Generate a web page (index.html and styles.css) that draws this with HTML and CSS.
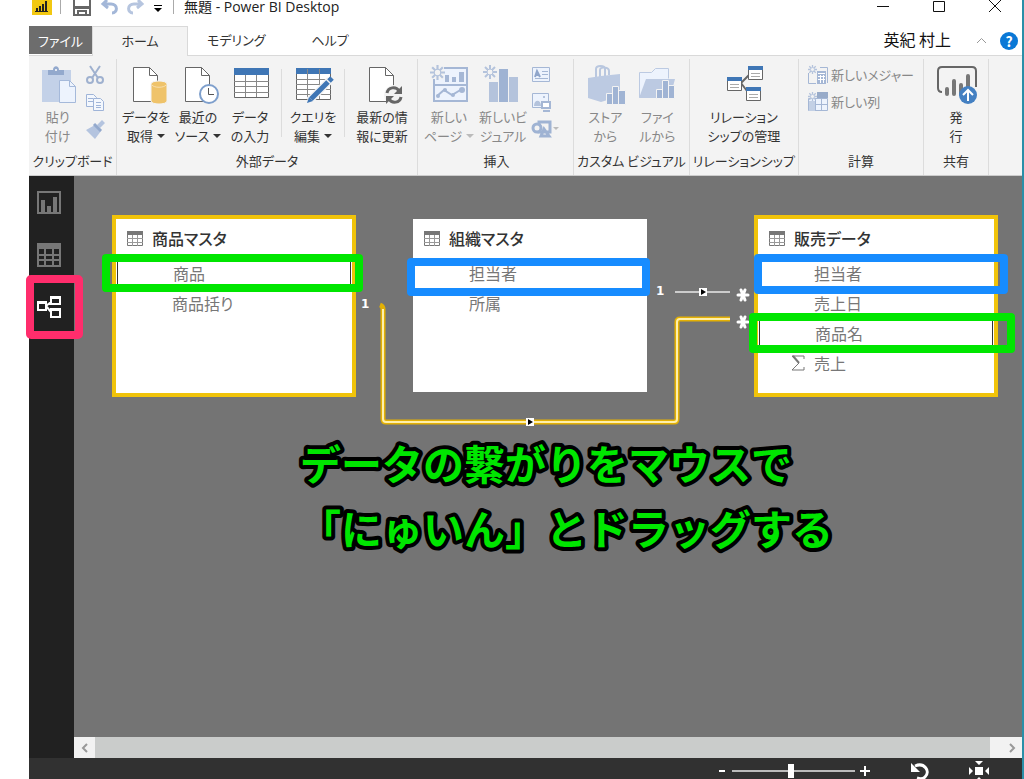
FILE: index.html
```html
<!DOCTYPE html>
<html lang="ja">
<head>
    <meta charset="UTF-8">
    <meta name="viewport" content="width=device-width, initial-scale=1.0">
    <title>無題 - Power BI Desktop</title>
    <link rel="stylesheet" href="styles.css">
</head>
<body>
    <svg class="defs" width="0" height="0">
        <symbol id="table-icon" viewBox="0 0 16 15">
            <path fill="#fff" stroke="#777" d="M.5.5h15v14H.5z"/>
            <path fill="#777" d="M0 0h16v4H0z"/>
            <path stroke="#999" d="M0 7.5h16M0 11.5h16M5.5 4v11M10.5 4v11"/>
        </symbol>
        <symbol id="spark" viewBox="0 0 14 14">
            <path stroke="#b4c3dc" stroke-width="2" d="M7 0v14M0 7h14M2 2l10 10M12 2L2 12"/>
            <circle cx="7" cy="7" r="3" fill="#f3f3f3" stroke="#b4c3dc"/>
        </symbol>
        <symbol id="page" viewBox="0 0 44 40">
            <path fill="#fff" stroke="#666" d="M9.500 2.500h16l8 8v26h-24z"/>
            <path fill="none" stroke="#666" d="M25.500 2.500v8h8"/>
        </symbol>
        <symbol id="many" viewBox="0 0 14 14">
            <path stroke="#fff" stroke-width="3" stroke-linecap="round" d="M2 7h10M5 2l4 10M9 2L5 12"/>
        </symbol>
        <symbol id="arrow" viewBox="0 0 8 8">
            <path fill="#fff" d="M0 0h8v8H0z"/>
            <path d="M2 1l5 3-5 3z"/>
        </symbol>
    </svg>

    <div class="window">
        <header class="titlebar">
            <svg class="logo" width="20" height="20" viewBox="0 0 20 20">
                <path fill="#f2c811" d="M0 0h20v20H0z"/>
                <path stroke="#222" stroke-width="2" d="M5 17v-4M8 17v-6M11 17V9M14 17V6"/>
                <path stroke="#222" d="M3 16.500h13"/>
            </svg>
            <span class="divider"></span>
            <button class="quick" aria-label="保存">
                <svg width="18" height="20" viewBox="0 0 18 20"><path fill="none" stroke="#666" stroke-width="2" d="M1 1h16v17H1z"/><path fill="#666" d="M1 9h16v3H1z"/><path fill="none" stroke="#666" stroke-width="2" d="M5 18v-4h8v4"/></svg>
            </button>
            <button class="quick" aria-label="元に戻す">
                <svg width="18" height="18" viewBox="0 0 18 18"><path fill="none" stroke="#a3b7d8" stroke-width="3" d="M7 2L3 6l5 4M3 6h8c7 0 7 9 1 9"/></svg>
            </button>
            <button class="quick" aria-label="やり直し">
                <svg width="18" height="18" viewBox="0 0 18 18"><path fill="none" stroke="#b6c5df" stroke-width="3" d="M11 2l4 4-5 4M15 6H7c-7 0-7 9-1 9"/></svg>
            </button>
            <button class="quick more" aria-label="カスタマイズ">
                <svg width="8" height="8" viewBox="0 0 8 8"><path d="M0 0h8v1H0zM0 3h8L4 7z"/></svg>
            </button>
            <span class="divider"></span>
            <h1 class="doc-title">無題 - Power BI Desktop</h1>
            <div class="window-btns">
                <button aria-label="最小化"><svg width="14" height="14" viewBox="0 0 14 14"><path stroke="#111" d="M1 6.500h12"/></svg></button>
                <button aria-label="最大化"><svg width="14" height="14" viewBox="0 0 14 14"><path fill="none" stroke="#111" d="M1.500 1.500h11v10h-11z"/></svg></button>
                <button aria-label="閉じる"><svg width="14" height="14" viewBox="0 0 14 14"><path stroke="#111" d="M1 0l12 12M13 0L1 12"/></svg></button>
            </div>
        </header>

        <nav class="tabs">
            <button class="tab file">ファイル</button>
            <button class="tab active">ホーム</button>
            <button class="tab">モデリング</button>
            <button class="tab help">ヘルプ</button>
            <div class="account">
                <span>英紀 村上</span>
                <button class="collapse" aria-label="リボンを折りたたむ"><svg width="11" height="7" viewBox="0 0 11 7"><path fill="none" stroke="#999" d="M1 6l4.500-4.500L10 6"/></svg></button>
                <button class="help-btn" aria-label="ヘルプ">?</button>
            </div>
        </nav>

        <div class="ribbon">
            <section class="group clipboard">
                <div class="tools">
                    <button class="tool off" disabled>
                        <svg class="icon" viewBox="0 0 44 40"><path fill="#c3d1e8" d="M6 5h29v32H6z"/><path fill="#93a9cd" d="M12 10V5h5c0-5 6-5 6 0h5v5z"/><circle cx="20" cy="5" r="1" fill="#fff"/><path fill="#edf3fd" stroke="#a5b9da" d="M23.500 15.500h10l6 6v16h-16z"/><path fill="none" stroke="#a5b9da" d="M33.500 15.500v6h6"/></svg>
                        <span>貼り<br>付け</span>
                    </button>
                    <div class="mini">
                        <button disabled aria-label="切り取り"><svg width="20" height="20" viewBox="0 0 20 20"><path fill="none" stroke="#9fb1cf" stroke-width="2" d="M5 1l8 12M15 1L7 13"/><circle cx="5" cy="15" r="3" fill="none" stroke="#9fb1cf" stroke-width="2"/><circle cx="15" cy="15" r="3" fill="none" stroke="#9fb1cf" stroke-width="2"/></svg></button>
                        <button disabled aria-label="コピー"><svg width="20" height="20" viewBox="0 0 20 20"><path fill="#f3f7fd" stroke="#9fb4d8" d="M1.500 2.500h7l3 3v9h-10z"/><path stroke="#9fb4d8" d="M3 6.500h5M3 9.500h5"/><path fill="#f3f7fd" stroke="#9fb4d8" d="M8.500 6.500h7l3 3v9h-10z"/><path stroke="#9fb4d8" d="M11 10.500h5M11 13.500h5M11 15.500h5"/></svg></button>
                        <button disabled aria-label="書式のコピー"><svg width="20" height="20" viewBox="0 0 20 20"><path fill="#b4c4df" d="M1 11l9-5 6 6-6 8zM17 1l3 3-5 5-3-3z"/><path stroke="#93a9cd" stroke-width="3" d="M9 5l7 7"/></svg></button>
                    </div>
                </div>
                <h2>クリップボード</h2>
            </section>

            <section class="group">
                <div class="tools">
                    <button class="tool">
                        <svg class="icon" viewBox="0 0 44 40"><use href="#page"/><path fill="#efc36a" stroke="#f3f3f3" d="M27 19c0-4 16-4 16 0v17c0 4-16 4-16 0z"/><path fill="none" stroke="#f8dfae" d="M28 20c2 3 12 3 14 0"/></svg>
                        <span>データを<br>取得<i class="caret"></i></span>
                    </button>
                    <button class="tool">
                        <svg class="icon" viewBox="0 0 44 40"><use href="#page"/><circle cx="33" cy="29" r="9" fill="#fff" stroke="#7e9fcc" stroke-width="2"/><path fill="none" stroke="#555" d="M32.500 23v6.500H38"/></svg>
                        <span>最近の<br>ソース<i class="caret"></i></span>
                    </button>
                    <button class="tool">
                        <svg class="icon" viewBox="0 0 44 40"><path fill="#fff" stroke="#666" d="M6.500 3.500h34v29h-34z"/><path fill="#3f76b5" d="M6 3h35v7H6z"/><path stroke="#888" d="M6 16.500h35M6 21.500h35M6 27.500h35M17.500 10v22M28.500 10v22"/></svg>
                        <span>データ<br>の入力</span>
                    </button>
                    <span class="sep"></span>
                    <button class="tool">
                        <svg class="icon" viewBox="0 0 44 40"><path fill="#fff" stroke="#666" d="M5.500 3.500h34v31h-34z"/><path fill="#3f76b5" d="M5 3h35v6H5z"/><path stroke="#888" d="M5 14.500h35M5 19.500h35M5 24.500h35M5 29.500h35M16.500 4v30M28.500 4v30"/><path stroke="#f3f3f3" stroke-width="8" d="M18 36l21-21"/><path stroke="#3f76b5" stroke-width="5" d="M20 34l17-17M38 16l3-3"/><path fill="#3f76b5" d="M16 38l2-6 4 4z"/></svg>
                        <span>クエリを<br>編集<i class="caret"></i></span>
                    </button>
                    <span class="sep"></span>
                    <button class="tool wide">
                        <svg class="icon" viewBox="0 0 44 40"><use href="#page"/><circle cx="34" cy="30" r="10" fill="#f3f3f3"/><path fill="none" stroke="#666" stroke-width="3" d="M27 28c1-6 9-7 12-2M41 32c-1 6-9 7-12 2"/><path fill="#666" d="M42 21v8h-8zM26 39v-8h8z"/></svg>
                        <span>最新の情<br>報に更新</span>
                    </button>
                </div>
                <h2>外部データ</h2>
            </section>

            <section class="group insert">
                <div class="tools">
                    <button class="tool off" disabled>
                        <svg class="icon" viewBox="0 0 44 40"><path fill="#edf3fd" stroke="#a5b7d5" stroke-width="2" d="M7 3h33v33H7zM7 20h33"/><path fill="#a5b7d5" d="M18 10h4v7h-4zM25 12h4v5h-4zM32 7h5v10h-5z"/><path fill="none" stroke="#a5b7d5" stroke-width="2" d="M10 31l7-6 8 5 10-6"/><g fill="#a5b7d5"><circle cx="11" cy="31" r="2"/><circle cx="18" cy="25" r="2"/><circle cx="26" cy="30" r="2"/><circle cx="35" cy="25" r="3"/></g><path fill="#f3f3f3" d="M0 0h17v14H0z"/><use href="#spark" x="3" width="15" height="15"/></svg>
                        <span>新しい<br>ページ<i class="caret"></i></span>
                    </button>
                    <button class="tool off" disabled>
                        <svg class="icon" viewBox="0 0 44 40"><path fill="#b4c3dc" d="M8 17h9v20H8zM28 12h9v25h-9z"/><path fill="#9fb3d3" d="M18 4h9v33h-9z"/><use href="#spark" x="2" width="14" height="14"/></svg>
                        <span>新しいビ<br>ジュアル</span>
                    </button>
                    <div class="mini">
                        <button disabled aria-label="テキスト ボックス"><svg width="20" height="20" viewBox="0 0 20 20"><path fill="#edf3fd" stroke="#a5b7d5" d="M1.500 2.500h17v14h-17z"/><path fill="none" stroke="#8fa5ca" stroke-width="2" d="M4 12l2-6 3 6M5 10h3"/><path stroke="#a5b7d5" d="M11 6.500h6M11 9.500h6M4 13.500h13"/></svg></button>
                        <button disabled aria-label="画像"><svg width="20" height="20" viewBox="0 0 20 20"><path fill="#edf3fd" stroke="#a5b7d5" d="M1.500 1.500h16v14h-16z"/><path fill="#b4c3dc" d="M3 14c0-7 7-7 7 0zM12 4h2v2h-2z"/><path fill="#fff" stroke="#a5b7d5" stroke-width="2" d="M11 10h8v6h-8zM12 19h7"/></svg></button>
                        <button disabled aria-label="図形"><svg width="28" height="20" viewBox="0 0 28 20"><path fill="none" stroke="#9fb3d3" stroke-width="3" d="M8 3h11v10H8zM13 10l5 7h-8z"/><circle cx="6" cy="9" r="4" fill="#f3f3f3" stroke="#9fb3d3" stroke-width="3"/><path fill="#bbb" d="M22 8h6l-3 3z"/></svg></button>
                    </div>
                </div>
                <h2>挿入</h2>
            </section>

            <section class="group">
                <div class="tools">
                    <button class="tool off" disabled>
                        <svg class="icon" viewBox="0 0 44 40"><path fill="none" stroke="#b9c7df" stroke-width="2" d="M13 12V4c0-4 9-4 9 0v7M17 12V5c0-4 9-3 9 1v4"/><path fill="#bccae2" d="M5 13l13-2 19-2v22l-19 6-13-4z"/><path fill="#a0b4d4" stroke="#f3f3f3" d="M23.500 28.500h6v11h-6zM29.500 21.500h6v18h-6zM35.500 25.500h7v14h-7z"/></svg>
                        <span>ストア<br>から</span>
                    </button>
                    <button class="tool off" disabled>
                        <svg class="icon" viewBox="0 0 44 40"><path fill="#edf3fd" stroke="#bccae2" d="M4.500 32.500v-25h12l4-4h13v10"/><path fill="#bccae2" d="M4 33l7-19h29l-5 19z"/><path fill="#a0b4d4" stroke="#f3f3f3" d="M21.500 24.500h6v9h-6zM27.500 15.500h6v18h-6zM33.500 20.500h6v13h-6z"/></svg>
                        <span>ファイ<br>ルから</span>
                    </button>
                </div>
                <h2>カスタム ビジュアル</h2>
            </section>

            <section class="group">
                <div class="tools">
                    <button class="tool wide">
                        <svg class="icon" viewBox="0 0 44 40"><path stroke="#666" stroke-width="2" d="M19 18l9-9M19 18l6 8"/><path fill="#fff" stroke="#666" d="M5.500 12.500h14v13h-14zM26.500 1.500h14v13h-14zM24.500 22.500h14v13h-14z"/><path fill="#3f76b5" d="M5 12h15v4H5zM26 1h15v4H26zM24 22h15v4H24z"/><path stroke="#aaa" d="M8 19.500h9M8 22.500h9M29 8.500h9M29 11.500h9M27 29.500h9M27 32.500h9"/></svg>
                        <span>リレーション<br>シップの管理</span>
                    </button>
                </div>
                <h2>リレーションシップ</h2>
            </section>

            <section class="group calc">
                <div class="tools stacked">
                    <button class="line-tool" disabled>
                        <svg width="20" height="20" viewBox="0 0 20 20"><path fill="none" stroke="#a5b7d5" d="M.5 8v10.500H8M12 2.500h7.500V18"/><path fill="#a5b7d5" d="M9 6h9v13H9z"/><path stroke="#fff" d="M10 8.500h7M10 11.500h7M10 14.500h7M12.500 10v8M15.500 10v8"/><use href="#spark" width="9" height="9"/></svg>
                        新しいメジャー
                    </button>
                    <button class="line-tool" disabled>
                        <svg width="20" height="20" viewBox="0 0 20 20"><path fill="#edf3fd" stroke="#a5b7d5" d="M.5 6.500h19v12H.5zM0 12.500h20M7.500 6v13M13.500 6v13"/><path fill="#98abc9" d="M9 0h11v6H9z"/><path fill="#c3d0e5" d="M1 9h6v10H1z"/><use href="#spark" width="9" height="9"/></svg>
                        新しい列
                    </button>
                </div>
                <h2>計算</h2>
            </section>

            <section class="group share">
                <div class="tools">
                    <button class="tool">
                        <svg class="icon" viewBox="0 0 44 40"><path fill="none" stroke="#666" stroke-width="2" d="M8 27c-3 0-4-1-4-4V6c0-2 1-4 4-4h30c3 0 4 2 4 4v16"/><path stroke="#777" stroke-width="4" stroke-linecap="round" d="M13 29v-5M20 29V16M27 29v-9M34 26V11"/><circle cx="34" cy="30" r="9" fill="#4480c2"/><path fill="none" stroke="#fff" stroke-width="2" d="M34 36V25M29 30l5-5 5 5"/></svg>
                        <span>発<br>行</span>
                    </button>
                </div>
                <h2>共有</h2>
            </section>
        </div>

        <main class="workspace">
            <aside class="views">
                <button aria-label="レポート"><svg width="24" height="24" viewBox="0 0 24 24"><path fill="none" stroke="#777" stroke-width="2" d="M1 1h22v21H1z"/><path stroke="#777" stroke-width="4" d="M6 22V9M12 22v-7M18 22V6"/></svg></button>
                <button aria-label="データ"><svg width="24" height="24" viewBox="0 0 24 24"><path fill="none" stroke="#777" stroke-width="2" d="M1 1h22v22H1zM1 12h22M1 17h22M8 6v17M16 6v17"/><path fill="#777" d="M0 0h24v6H0z"/></svg></button>
                <button class="current" aria-label="リレーションシップ"><svg width="24" height="24" viewBox="0 0 24 24"><path fill="none" stroke="#fff" stroke-width="2" d="M1 8h8v7H1zM14 2h9v7h-9zM14 14h9v8h-9zM9 11l5-4M9 11l5 6"/><path fill="#fff" d="M0 6h10v3H0zM13 1h11v3H13zM13 13h11v3H13z"/></svg></button>
            </aside>

            <div class="diagram">
                <div class="canvas">
                    <article class="entity selected products">
                        <h3><svg width="16" height="15"><use href="#table-icon"/></svg>商品マスタ</h3>
                        <ul>
                            <li class="linked">商品</li>
                            <li>商品括り</li>
                        </ul>
                    </article>
                    <article class="entity staff">
                        <h3><svg width="16" height="15"><use href="#table-icon"/></svg>組織マスタ</h3>
                        <ul>
                            <li>担当者</li>
                            <li>所属</li>
                        </ul>
                    </article>
                    <article class="entity selected sales">
                        <h3><svg width="16" height="15"><use href="#table-icon"/></svg>販売データ</h3>
                        <ul>
                            <li>担当者</li>
                            <li>売上日</li>
                            <li class="linked">商品名</li>
                            <li><svg class="sigma" width="14" height="16" viewBox="0 0 14 16"><path fill="none" stroke="#777" d="M13 4V1H1l7 7-7 7h12v-3"/><path stroke="#777" stroke-width="2" d="M2 1l6 7"/></svg>売上</li>
                        </ul>
                    </article>

                    <svg class="relations" width="700" height="260" viewBox="0 0 700 260">
                        <g fill="none">
                            <path stroke="#e3b004" stroke-width="5" d="M306 129q3 1 3 4v110q0 3 3 3h288q3 0 3-3V146q0-3 3-3h50"/>
                            <path stroke="#fff0ac" stroke-width="2" d="M309 133v110q0 3 3 3h288q3 0 3-3V146q0-3 3-3h50"/>
                            <path stroke="#ccc" stroke-width="2" d="M601 116h55"/>
                        </g>
                        <use href="#arrow" x="452" y="242" width="8" height="8"/>
                        <use href="#arrow" x="625" y="112" width="8" height="8"/>
                        <use href="#many" x="662" y="112" width="14" height="14"/>
                        <use href="#many" x="662" y="139" width="14" height="14"/>
                        <text class="one" x="287" y="132">1</text>
                        <text class="one" x="582" y="119">1</text>
                    </svg>

                    <span class="mark green mark-product"></span>
                    <span class="mark blue mark-staff"></span>
                    <span class="mark blue mark-sales-staff"></span>
                    <span class="mark green mark-sales-product"></span>
                    <svg class="note" width="560" height="140">
                        <text x="6" y="50">データの繋がりをマウスで</text>
                        <text x="6" y="115">「にゅいん」とドラッグする</text>
                    </svg>
                </div>
                <div class="scrollbar">
                    <button aria-label="左へ"><svg width="8" height="10" viewBox="0 0 8 10"><path fill="none" stroke="#999" stroke-width="2" d="M6 1L2 5l4 4"/></svg></button>
                    <span class="thumb"></span>
                    <button class="right" aria-label="右へ"><svg width="8" height="10" viewBox="0 0 8 10"><path fill="none" stroke="#999" stroke-width="2" d="M2 1l4 4-4 4"/></svg></button>
                </div>
            </div>
        </main>

        <footer class="statusbar">
            <button aria-label="縮小"><svg width="12" height="12" viewBox="0 0 12 12"><path stroke="#fff" stroke-width="2" d="M3 6h6"/></svg></button>
            <input class="zoom" type="range" min="0" max="100" value="48" aria-label="ズーム">
            <button aria-label="拡大"><svg width="12" height="12" viewBox="0 0 12 12"><path stroke="#fff" stroke-width="2" d="M1 6h10M6 1v10"/></svg></button>
            <button class="reset" aria-label="リセット"><svg width="20" height="18" viewBox="0 0 20 18"><path fill="none" stroke="#fff" stroke-width="3" d="M5 4c9-4 16 5 10 11-2 2-5 2-8 1"/><path fill="#fff" d="M1 1v9h9z"/></svg></button>
            <button class="fit" aria-label="画面に合わせる"><svg width="20" height="20" viewBox="0 0 20 20"><path fill="#fff" d="M6 6h8v8H6zM6 0h8l-4 4zM6 20h8l-4-4zM0 6v8l4-4zM20 6v8l-4-4z"/></svg></button>
        </footer>
    </div>
</body>
</html>
```
FILE: styles.css
```css
*{
    margin: 0;
    padding: 0;
    box-sizing: border-box;
}

body{
    background-color: white;
    color: #333;
    font-family: "Noto Sans CJK JP", sans-serif;
    font-size: 13px;
    font-feature-settings: "palt";
    overflow: hidden;
}

button{
    border: none;
    background: none;
    color: inherit;
    font: inherit;
    font-feature-settings: inherit;
}

svg{
    display: block;
    flex-shrink: 0;
}

.defs{
    position: absolute;
}

.window{
    display: flex;
    flex-direction: column;
    height: 100vh;
    margin-left: 29px;
    border-right: 2px solid #2a8fa8;
}

/* title bar */
.titlebar{
    display: flex;
    align-items: center;
    height: 26px;
    padding: 0 12px 12px 3px;
}

.logo{
    margin-top: -4px;
}

.divider{
    width: 1px;
    height: 14px;
    margin: 0 12px 0 8px;
    background-color: #aaa;
}

.quick{
    margin-right: 9px;
}

.more{
    margin: 4px 3px 0 0;
}

.doc-title{
    margin-left: -2px;
    color: #222;
    font-family: "Open Sans", "Noto Sans CJK JP", sans-serif;
    font-size: 14px;
    font-weight: normal;
    line-height: 14px;
    white-space: nowrap;
}

.window-btns{
    display: flex;
    gap: 42px;
    margin: 0 8px 0 auto;
}

/* tabs */
.tabs{
    display: flex;
    height: 30px;
    border-bottom: 1px solid #d9d9d9;
}

.tab{
    padding: 0 19px 2px;
    white-space: nowrap;
}

.tab.file{
    width: 63px;
    height: 28px;
    padding: 0;
    background-color: #6d6d6d;
    color: white;
}

.tab.active{
    width: 96px;
    height: 30px;
    border: 1px solid #d9d9d9;
    border-bottom: none;
    background-color: #f3f3f3;
}

.tab.help{
    margin-left: 8px;
}

.account{
    display: flex;
    align-items: center;
    margin-left: auto;
    padding-right: 4px;
    color: #111;
    font-size: 16px;
    line-height: 24px;
}

.account span{
    padding-bottom: 3px;
}

.collapse{
    margin: 0 13px 0 25px;
}

.help-btn{
    width: 18px;
    height: 18px;
    border-radius: 50%;
    background-color: #0a78d6;
    color: white;
    font-size: 14px;
    font-weight: bold;
    line-height: 18px;
}

/* ribbon */
.ribbon{
    display: flex;
    height: 120px;
    padding-top: 3px;
    border-bottom: 1px solid #ccc;
    background-color: #f3f3f3;
}

.group{
    display: flex;
    flex-direction: column;
    justify-content: space-between;
    padding: 6px 3px 4px;
    border-right: 1px solid #dcdcdc;
}

.group h2{
    font-size: 13px;
    font-weight: normal;
    line-height: 20px;
    text-align: center;
    white-space: nowrap;
}

.tools{
    display: flex;
    justify-content: center;
}

.tool{
    display: flex;
    flex-direction: column;
    align-items: center;
    gap: 2px;
    width: 52px;
    line-height: 19px;
    white-space: nowrap;
}

.tool.wide{
    width: 64px;
}

.tool.off, .line-tool{
    color: #888;
}

.icon{
    width: 44px;
    height: 40px;
}

.caret{
    display: inline-block;
    margin-left: 4px;
    border: 4px solid transparent;
    border-top-color: #333;
    border-bottom: none;
    vertical-align: 3px;
}

.off .caret{
    border-top-color: #bbb;
}

.sep{
    width: 1px;
    margin: 4px 5px 8px;
    background-color: #dcdcdc;
}

.mini{
    display: flex;
    flex-direction: column;
    gap: 7px;
    width: 28px;
}

.clipboard{
    width: 88px;
}

.clipboard .tools, .insert .tools{
    justify-content: flex-start;
    gap: 2px;
}

.insert{
    width: 156px;
    padding-left: 5px;
}

.calc{
    width: 125px;
}

.share{
    width: 65px;
}

.tools.stacked{
    flex-direction: column;
    gap: 7px;
    padding-left: 6px;
}

.line-tool{
    display: flex;
    align-items: center;
    gap: 3px;
    line-height: 20px;
    white-space: nowrap;
}

/* workspace */
.workspace{
    display: flex;
    flex: 1;
    min-height: 0;
}

.views{
    display: flex;
    flex-direction: column;
    width: 45px;
    padding-top: 1px;
    background-color: #212121;
}

.views button{
    display: flex;
    justify-content: center;
    align-items: center;
    height: 52px;
    padding-right: 6px;
}

.views .current{
    position: relative;
}

.views .current::after{
    content: "";
    position: absolute;
    inset: -6px -9px -6px -3px;
    border: 8px solid #ff2d6c;
    border-radius: 5px;
    z-index: 1;
}

.diagram{
    display: flex;
    flex: 1;
    flex-direction: column;
    min-width: 0;
}

.canvas{
    position: relative;
    flex: 1;
    background-color: #747474;
}

.entity{
    position: absolute;
    padding: 3px 1px;
    background-color: white;
}

.entity.selected{
    width: 244px;
    height: 182px;
    border: 4px solid #f0c30a;
}

.products{
    left: 38px;
    top: 39px;
}

.staff{
    left: 339px;
    top: 43px;
    width: 234px;
    height: 173px;
}

.sales{
    left: 680px;
    top: 39px;
}

.entity h3{
    display: flex;
    align-items: center;
    gap: 9px;
    padding-left: 10px;
    font-size: 16px;
    font-weight: 500;
    line-height: 32px;
}

.entity ul{
    padding-top: 5px;
    list-style: none;
}

.entity li{
    position: relative;
    height: 30px;
    padding-left: 55px;
    color: #777;
    font-size: 16px;
    line-height: 28px;
}

.entity .linked{
    border: 1px solid #333;
    border-width: 0 1px;
}

.sigma{
    position: absolute;
    left: 32px;
    top: 6px;
}

.relations{
    position: absolute;
    left: 0;
    top: 0;
}

.one{
    fill: white;
    font-family: "DejaVu Sans", sans-serif;
    font-size: 12px;
    font-weight: bold;
}

.mark{
    position: absolute;
    border: 8px solid;
    border-radius: 4px;
}

.green{
    border-color: #00e600;
}

.blue{
    border-color: #178cff;
}

.mark-product{
    left: 28px;
    top: 78px;
    width: 261px;
    height: 38px;
}

.mark-staff{
    left: 333px;
    top: 82px;
    width: 243px;
    height: 38px;
}

.mark-sales-staff{
    left: 680px;
    top: 78px;
    width: 254px;
    height: 40px;
}

.mark-sales-product{
    left: 675px;
    top: 137px;
    width: 266px;
    height: 40px;
}

.note{
    position: absolute;
    left: 220px;
    top: 254px;
    fill: #00e600;
    stroke: black;
    stroke-width: 8px;
    stroke-linejoin: round;
    paint-order: stroke;
    font-feature-settings: normal;
    font-size: 41px;
    font-weight: bold;
}

.scrollbar{
    display: flex;
    height: 21px;
    background-color: #f2f2f2;
}

.scrollbar button{
    display: flex;
    justify-content: center;
    align-items: center;
    width: 21px;
}

.scrollbar .right{
    width: 32px;
    padding-left: 12px;
}

.thumb{
    flex: 1;
    background-color: #cacccb;
}

/* status bar */
.statusbar{
    display: flex;
    justify-content: flex-end;
    align-items: center;
    height: 21px;
    padding: 5px 33px 0 0;
    background-color: #313131;
}

.zoom{
    appearance: none;
    width: 123px;
    height: 14px;
    margin: 0 4px;
    background: linear-gradient(#bbb, #bbb) center / 100% 2px no-repeat;
}

.zoom::-webkit-slider-thumb{
    appearance: none;
    width: 6px;
    height: 14px;
    background-color: white;
}

.reset{
    margin: 0 39px;
}
```
